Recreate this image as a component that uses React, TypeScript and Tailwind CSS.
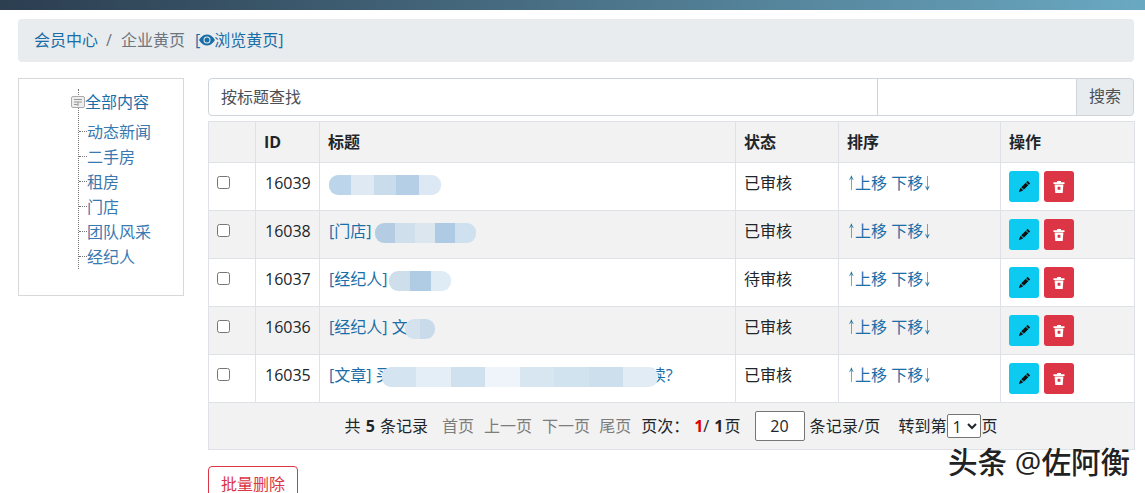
import { BsEyeFill, BsPencilFill } from 'react-icons/bs';

const font = "[font-family:'Open_Sans','Noto_Sans_CJK_SC',sans-serif]";

const treeItems = ['动态新闻', '二手房', '租房', '门店', '团队风采', '经纪人'];

type Row = { id: number; prefix: string; status: string; blob: string[]; blobWidth: number; blobClass?: string; suffix?: string };

const rows: Row[] = [
  { id: 16039, prefix: '', status: '已审核', blob: ['#bcd5ea', '#dfe9f3', '#c9dcec', '#b4cfe6', '#dce8f3'], blobWidth: 112 },
  { id: 16038, prefix: '[门店] ', status: '已审核', blob: ['#b4cde3', '#d0dfec', '#dbe6ee', '#afcbe3', '#cfe0ee'], blobWidth: 101, blobClass: 'ml-[-1px]' },
  { id: 16037, prefix: '[经纪人]', status: '待审核', blob: ['#cfdeeb', '#b0cce4', '#dfebf5'], blobWidth: 62, blobClass: 'ml-[2px]' },
  { id: 16036, prefix: '[经纪人] 文', status: '已审核', blob: ['#d4e2ee', '#c9dbeb'], blobWidth: 30, blobClass: 'ml-[-3px]' },
  { id: 16035, prefix: '[文章] 买', status: '已审核', blob: ['#d4e4f1', '#e4eef6', '#cfe1ef', '#eef4f9', '#d8e6f2', '#d2e3f0', '#cddfed', '#e2ecf5'], blobWidth: 276, blobClass: 'ml-[-10px] mr-[-8px]', suffix: '读?' },
];

function Blob({ colors, width, className }: { colors: string[]; width: number; className?: string }) {
  return (
    <span
      className={`relative z-10 inline-flex h-[20px] overflow-hidden rounded-[9px] align-middle blur-[0.6px] ${className ?? ''}`}
      style={{ width }}
    >
      {colors.map((c, i) => (
        <span key={i} className="h-full flex-1" style={{ backgroundColor: c }} />
      ))}
    </span>
  );
}

function Arrow({ children }: { children: string }) {
  return <span className="inline-block w-[8px] origin-left scale-x-[0.55]">{children}</span>;
}

function TrashIcon() {
  return (
    <svg width="14" height="14" viewBox="0 0 14 14">
      <path d="M1.5 2.2h11v1.8h-11z M5 1h4v1.2H5z" fill="#fff" />
      <path fillRule="evenodd" d="M2.6 4.6h8.8l-.7 8.4H3.3z M5.6 6.8v3h2.8v-3z" fill="#fff" />
    </svg>
  );
}

export default function App() {
  const cell = 'border border-[#dee2e6] px-[8px]';
  const bodyCell = `${cell} pb-[15px] pt-[8px]`;

  return (
    <div className={`${font} relative h-[493px] w-[1145px] overflow-hidden bg-white text-[16px] leading-[24px] text-[#212529]`}>
      {/* top bar */}
      <div className="h-[10px] bg-gradient-to-r from-[#2c3e50] to-[#6aa9c2]" />

      <div className="pl-[18px] pr-[11px] pt-[9px]">
        {/* breadcrumb */}
        <div className="flex h-[43px] items-center rounded-[4px] bg-[#e9ecef] pb-[2px] pl-[16px]">
          <a className="text-[#1a6ea8]">会员中心</a>
          <span className="pl-[8px] pr-[9px] text-[#6c757d]">/</span>
          <span className="text-[#6c757d]">企业黄页</span>
          <a className="ml-[10px] flex items-center text-[#1a6ea8]">
            [<span className="flex w-[14px] justify-center"><BsEyeFill size={16} className="shrink-0" /></span>浏览黄页]
          </a>
        </div>

        <div className="mt-[16px] flex items-start">
          {/* tree */}
          <div className="h-[218px] w-[166px] shrink-0 border border-[#d8d8d8]">
            <div className="relative ml-[59px] mt-[10px]">
              <div className="absolute left-0 top-0 h-[180px] border-l border-dotted border-[#777]" />
              <div className="relative flex h-[25px] items-center">
                <svg width="14" height="12" viewBox="0 0 14 12" className="absolute left-[-7px] top-[7px]">
                  <rect x="0.5" y="0.5" width="13" height="11" rx="1.5" fill="#eee" stroke="#aaa" />
                  <path d="M3 3.5h8M3 6h8M7 6v4M3 8.5h4" stroke="#999" fill="none" />
                </svg>
                <span className="ml-[7px] text-[#1a6ea8]">全部内容</span>
              </div>
              <ul className="mt-[5px]">
                {treeItems.map((t) => (
                  <li key={t} className="flex h-[25px] items-center">
                    <span className="ml-[1px] w-[8px] border-t border-dotted border-[#777]" />
                    <span className="text-[#3a78b0]">{t}</span>
                  </li>
                ))}
              </ul>
            </div>
          </div>

          {/* main */}
          <div className="ml-[24px] flex-1">
            <div className="flex h-[38px]">
              <input
                readOnly
                value="按标题查找"
                className="h-full w-[670px] rounded-l-[4px] border border-[#ced4da] px-[12px] pb-[2px] text-[#495057] outline-none"
              />
              <input readOnly className="ml-[-1px] h-full w-[200px] border border-[#ced4da] outline-none" />
              <button className="ml-[-1px] h-full w-[58px] rounded-r-[4px] border border-[#ced4da] bg-[#e9ecef] pb-[2px] text-[#495057]">
                搜索
              </button>
            </div>

            <table className="mt-[5px] w-[926px] table-fixed border-collapse">
              <colgroup>
                <col className="w-[47px]" />
                <col className="w-[64px]" />
                <col className="w-[416px]" />
                <col className="w-[103px]" />
                <col className="w-[162px]" />
                <col className="w-[134px]" />
              </colgroup>
              <thead>
                <tr className="h-[41px] bg-[#f2f2f2] text-left font-bold">
                  <th className={cell} />
                  <th className={cell}>ID</th>
                  <th className={cell}>标题</th>
                  <th className={cell}>状态</th>
                  <th className={cell}>排序</th>
                  <th className={cell}>操作</th>
                </tr>
              </thead>
              <tbody>
                {rows.map((r, i) => (
                  <tr key={r.id} className={`h-[48px] ${i % 2 === 1 ? 'bg-[#f2f2f2]' : 'bg-white'}`}>
                    <td className={`${cell} pb-[8px] pt-[5px] align-top`}>
                      <input type="checkbox" className="mt-[8px] block h-[13px] w-[13px]" />
                    </td>
                    <td className={`${bodyCell} pl-[9px]`}>{r.id}</td>
                    <td className={`${bodyCell} whitespace-pre pl-[9px] text-[#1a6ea8]`}>
                      {r.prefix}
                      <Blob colors={r.blob} width={r.blobWidth} className={r.blobClass} />
                      {r.suffix}
                    </td>
                    <td className={bodyCell}>{r.status}</td>
                    <td className={`${bodyCell} whitespace-pre text-[#1a6ea8]`}>
                      <Arrow>↑</Arrow>上移 下移<Arrow>↓</Arrow>
                    </td>
                    <td className={`${cell} py-0`}>
                      <div className="flex gap-[5px]">
                        <button className="flex h-[31px] w-[30px] items-center justify-center rounded-[3px] bg-[#0dcaf0]">
                          <BsPencilFill size={11} className="text-[#111]" />
                        </button>
                        <button className="flex h-[31px] w-[30px] items-center justify-center rounded-[3px] bg-[#dc3545]">
                          <TrashIcon />
                        </button>
                      </div>
                    </td>
                  </tr>
                ))}
                <tr className="h-[47px] bg-[#f2f2f2]">
                  <td colSpan={6} className={cell}>
                    <div className="ml-[-1px] flex items-center justify-center whitespace-pre">
                      <span>共 <b className="mx-[1px]">5</b> 条记录</span>
                      <span className="ml-[14px] text-[#7d7d7d]">首页</span>
                      <span className="ml-[10px] text-[#7d7d7d]">上一页</span>
                      <span className="ml-[10px] text-[#7d7d7d]">下一页</span>
                      <span className="ml-[9px] text-[#7d7d7d]">尾页</span>
                      <span className="ml-[10px]">页次：</span>
                      <b className="ml-[5px] text-[#e00000]">1</b>
                      <span>/ <b className="mx-[1px]">1</b>页</span>
                      <input readOnly value="20" className="ml-[14px] h-[30px] w-[50px] rounded-[2px] border border-[#767676] bg-white text-center outline-none" />
                      <span className="ml-[5px] tracking-[0.2px]">条记录/页</span>
                      <span className="ml-[18px]">转到第</span>
                      <select className="ml-[1px] h-[24px] w-[34px] rounded-[2px] border border-[#767676] bg-white text-[16px]" defaultValue="1">
                        <option value="1">1</option>
                      </select>
                      <span>页</span>
                    </div>
                  </td>
                </tr>
              </tbody>
            </table>

            <button className="mt-[16px] h-[38px] w-[90px] rounded-[4px] border border-[#dc3545] pb-[2px] text-[#dc3545]">批量删除</button>
          </div>
        </div>
      </div>

      {/* watermark */}
      <div className="absolute left-[948px] top-[445px] whitespace-nowrap text-[29.6px] font-medium leading-[34px] text-[#222] [text-shadow:0_0_3px_#fff]">
        头条 @佐阿衡
      </div>
    </div>
  );
}
